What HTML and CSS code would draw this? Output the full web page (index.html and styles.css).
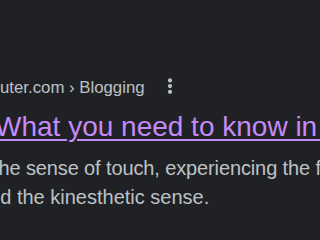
FILE: index.html
```html
<!DOCTYPE html>
<html lang="en">
<head>
<meta charset="utf-8">
<title>Search result</title>
<link rel="stylesheet" href="styles.css">
</head>
<body>
<div class="page">
  <div class="result">
    <div class="crumbs">
      <span class="crumb-text">uter.com <span class="sep">›</span> Blogging</span>
      <svg class="more" width="16" height="20" viewBox="0 0 16 20" aria-hidden="true">
        <circle cx="8" cy="2.4" r="2.1"/>
        <circle cx="8" cy="8.1" r="2.1"/>
        <circle cx="8" cy="13.8" r="2.1"/>
      </svg>
    </div>
    <a class="title" href="#">What you need to know in 2023</a>
    <div class="snippet">
      <div class="line line-1">the sense of touch, experiencing the feel</div>
      <div class="line line-2">and the kinesthetic sense.</div>
    </div>
  </div>
</div>
</body>
</html>
```

FILE: styles.css
```css
html, body {
  margin: 0;
  padding: 0;
  background: #202124;
}

.page {
  width: 320px;
  height: 240px;
  overflow: hidden;
  background: #202124;
  font-family: "Liberation Sans", Arial, sans-serif;
}

.result {
  padding-top: 76px;
  display: flex;
  flex-direction: column;
}

.crumbs {
  display: flex;
  align-items: center;
  height: 24px;
  font-size: 16.8px;
  line-height: 24px;
  color: #bdc1c6;
  white-space: nowrap;
}

.sep {
  color: #bdc1c6;
}

.more {
  margin-left: 17px;
  fill: #bdc1c6;
  flex: none;
}

.title {
  display: block;
  margin-top: 9px;
  margin-left: -5px;
  font-size: 28px;
  line-height: 36px;
  color: #c58af9;
  text-decoration: underline;
  text-decoration-thickness: 1.5px;
  text-underline-offset: 2.5px;
  white-space: nowrap;
}

.snippet {
  margin-top: 9px;
  font-size: 20px;
  line-height: 29px;
  color: #bdc1c6;
}

.line {
  white-space: nowrap;
}

.line-1 {
  margin-left: -7px;
  letter-spacing: -0.12px;
}

.line-2 {
  margin-left: -22px;
}
```
